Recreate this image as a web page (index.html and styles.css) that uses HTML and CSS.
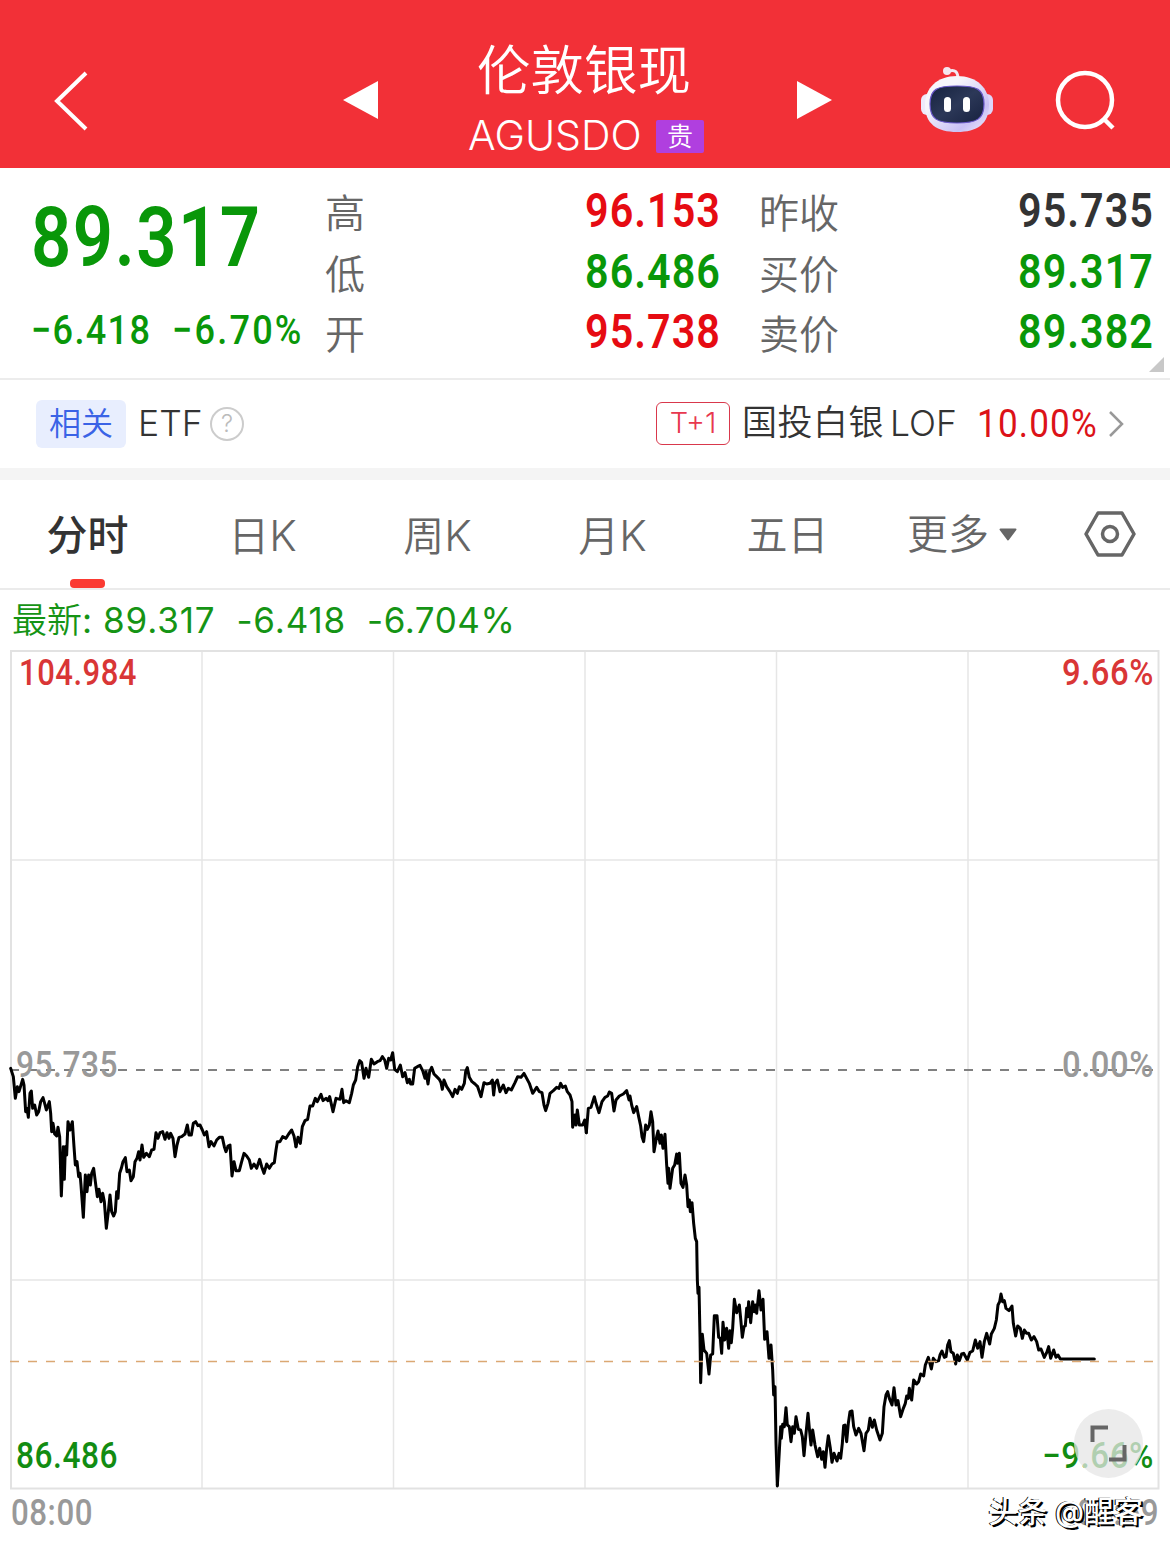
FILE: index.html
```html
<!DOCTYPE html>
<html lang="zh-CN">
<head>
    <meta charset="UTF-8">
    <meta name="viewport" content="width=device-width, initial-scale=1.0">
    <title>伦敦银现 AGUSDO</title>
    <link rel="stylesheet" href="styles.css">
</head>
<body>
    <header class="header">
        <svg class="back" width="36" height="62" viewBox="0 0 36 62"><path d="M33 3L4 31L33 59"/></svg>
        <svg class="prev" width="35" height="38" viewBox="0 0 35 38"><path d="M0 19L35 0V38Z"/></svg>
        <div class="title">
            <h1>伦敦银现</h1>
            <div class="code"><span>AGUSDO</span><i class="badge">贵</i></div>
        </div>
        <svg class="next" width="35" height="38" viewBox="0 0 35 38"><path d="M35 19L0 0V38Z"/></svg>
        <svg class="robot" width="74" height="68" viewBox="0 0 74 68">
            <defs>
                <linearGradient id="shell" x1="0" y1="0" x2="1" y2="1">
                    <stop offset="0.3" stop-color="#f7f6fb"/>
                    <stop offset="0.75" stop-color="#c9c0f5"/>
                    <stop offset="1" stop-color="#f1eefb"/>
                </linearGradient>
                <linearGradient id="face" x1="0" y1="0" x2="1" y2="1">
                    <stop offset="0" stop-color="#17233f"/>
                    <stop offset="0.5" stop-color="#2c3858"/>
                    <stop offset="1" stop-color="#17213f"/>
                </linearGradient>
            </defs>
            <path d="M29 5C35 3 38 6 38 13" fill="none" stroke="#f3e9f2" stroke-width="3"/>
            <circle cx="27" cy="5" r="4" fill="#f5e6ef"/>
            <rect x="1" y="28" width="12" height="21" rx="6" fill="#eeeafb"/>
            <rect x="61" y="28" width="12" height="21" rx="6" fill="#ddd5fa"/>
            <path d="M37 10C57 10 69 22 69 39C69 58 57 66 37 66C17 66 5 58 5 39C5 22 17 10 37 10Z" fill="url(#shell)"/>
            <path d="M37 20C57 20 64 23 64 38C64 53 57 57 37 57C17 57 10 53 10 38C10 23 17 20 37 20Z" fill="url(#face)" stroke="#6958c9" stroke-width="1.2"/>
            <rect x="24" y="31" width="7" height="15" rx="3.5" fill="#fff"/>
            <rect x="43" y="31" width="7" height="15" rx="3.5" fill="#fff"/>
        </svg>
        <svg class="search" width="62" height="62" viewBox="0 0 62 62"><circle cx="30" cy="30" r="27"/><path d="M48 48L58 58"/></svg>
    </header>

    <section class="quote">
        <div class="last">
            <div class="price num"><b>89.317</b></div>
            <div class="change num"><b>−6.418</b><b class="pct">−6.70%</b></div>
        </div>
        <div class="col col-a">
            <div class="row"><span>高</span><b class="num red">96.153</b></div>
            <div class="row"><span>低</span><b class="num green">86.486</b></div>
            <div class="row"><span>开</span><b class="num red">95.738</b></div>
        </div>
        <div class="col col-b">
            <div class="row"><span>昨收</span><b class="num dark">95.735</b></div>
            <div class="row"><span>买价</span><b class="num green">89.317</b></div>
            <div class="row"><span>卖价</span><b class="num green">89.382</b></div>
        </div>
        <i class="corner"></i>
    </section>

    <section class="related">
        <span class="tag">相关</span>
        <span class="etf">ETF</span>
        <span class="help">?</span>
        <span class="t1">T+1</span>
        <span class="fund">国投白银</span><span class="lof">LOF</span>
        <span class="rise num">10.00%</span>
        <svg class="more" width="16" height="28" viewBox="0 0 16 28"><path d="M2 2L14 14L2 26"/></svg>
    </section>

    <nav class="tabs">
        <a class="tab active">分时</a>
        <a class="tab">日<em>K</em></a>
        <a class="tab">周<em>K</em></a>
        <a class="tab">月<em>K</em></a>
        <a class="tab">五日</a>
        <a class="tab tab-more">更多<svg width="18" height="13" viewBox="0 0 18 13"><path d="M1.500 1.500H16.500L9 11.500Z"/></svg></a>
        <svg class="setting" width="52" height="46" viewBox="0 0 52 46"><path d="M14 2H38L50 23L38 44H14L2 23Z"/><circle cx="26" cy="23" r="7.500"/></svg>
    </nav>

    <div class="latest"><span class="cn">最新</span><span class="colon">:</span><span>89.317</span><span>-6.418</span><span>-6.704%</span></div>

    <div class="chart">
        <svg width="1170" height="903" viewBox="0 650 1170 903">
            <g class="grid">
                <path d="M202 651V1488M393.500 651V1488M585 651V1488M776.500 651V1488M968 651V1488M11 860H1158M11 1280H1158"/>
                <rect x="11" y="651" width="1147.500" height="837.500"/>
            </g>
            <path class="base" d="M10 1070H1158"/>

            <!-- price line, each piece is drawn at 3x in its own window -->
            <g class="line">
                <polyline transform="translate(0 1030) scale(.33333)" points="32,115 40,140 46,205 52,170 57,185 68,148 72,165 77,245 81,235 85,262 90,190 94,183 98,235 104,225 110,255 116,245 122,215 129,203 134,220 139,240 148,215 152,250 155,305 159,280 164,312 170,318 174,292 179,320 184,498 190,350 193,448 196,350 200,375 204,275 210,300 217,275 222,350 226,405 231,395 236,440 240,430 243,465 250,562 256,435 261,485 266,435 271,465 275,430 281,415 286,455 292,500 297,478 303,515 308,490 313,515 319,595 325,545 330,495 335,545 341,558 346,545 350,485 354,505 359,430 364,415 369,395 376,383 381,425 388,420 393,452 400,440 405,395 411,385 416,365 420,390 426,345 431,382 439,370 448,380 455,360 462,358 468,308 474,325 480,308 488,305 495,328 501,308 507,325 512,310 519,325 525,380 531,345 537,322 545,320 555,312 562,285 567,315 574,315 580,280 587,275 594,287 600,285 607,300 613,315 620,305 627,350 633,335 642,348 650,330 658,322 667,322 673,350 678,365 684,348 690,345 696,438 702,395 708,422 718,422 725,395 732,370 740,378 748,390 754,415 762,402 770,415 779,388 785,410 792,430 800,402 808,415 816,402 823,398 828,360 832,335 840,335 848,320 858,325 866,312 875,300 882,318 888,350"/>
                <polyline transform="translate(290 1030) scale(.33333)" points="18,350 24,322 31,340 37,290 45,272 53,268 60,228 68,228 76,205 82,215 93,193 99,212 108,205 114,212 119,200 129,245 138,205 150,208 156,178 161,218 168,212 178,218 185,190 190,165 197,150 203,110 209,92 215,98 222,145 228,115 236,142 244,88 252,102 262,95 270,92 277,80 284,90 290,115 296,85 302,90 308,68 314,118 322,125 331,105 338,140 345,128 352,158 358,148 362,162 368,162 374,115 382,110 390,106 398,122 405,145 408,125 414,162 419,125 425,112 432,132 440,140 448,148 453,158 457,178 462,150 470,170 480,185 488,200 495,178 502,190 508,170 515,178 523,160 527,125 532,113 538,142 546,155 555,162 563,170 573,200 582,158 590,162 600,160 607,150 611,195 615,160 622,150 630,185 640,165 648,188 655,175 664,180 675,158 683,140 693,142 702,130 710,145 718,160 728,190 740,172 748,185 756,188 762,225 767,242 774,220 780,190 790,182 800,172 807,175 812,160 818,172 826,168 832,185 840,195 846,215 848,292 855,255 858,285 862,240 868,285 878,285 884,270 889,308"/>
                <polyline transform="translate(540 1050) scale(.33333)" points="139,248 145,175 153,172 163,140 168,160 177,188 186,155 195,142 203,138 208,126 215,130 222,183 228,150 238,138 250,132 260,122 267,150 270,138 275,165 281,188 290,170 296,200 302,228 306,260 311,275 317,225 322,238 328,225 333,185 338,215 342,305 350,260 354,243 360,280 364,255 369,295 375,253 380,345 384,400 386,355 390,415 398,355 404,345 410,312 413,340 418,310 423,400 429,412 435,375 440,405 444,470 448,450 451,485 456,458 461,520 466,565 470,575 472,690 474,730 477,712 480,860 482,998 487,853 492,900 500,910 507,972 512,915 518,912 523,797 531,797 536,862 541,865 545,910 549,817 554,870 560,835 566,895 570,842 574,878 578,835 583,748 590,788 598,765 602,805 607,862 612,830 616,828 620,775 623,800 626,755 632,818 638,755 643,785 647,765 650,790 657,722 663,780 669,748 674,868 681,845 687,925 693,885 698,960 701,1035 705,1010 708,1180 712,1305"/>
                <polyline transform="translate(750 1270) scale(.33333)" points="82,648 86,580 92,470 94,505 98,463 103,470 108,413 112,465 118,470 123,515 128,470 133,490 138,440 145,478 152,480 157,500 162,557 168,490 174,430 178,475 183,525 188,480 195,525 203,560 209,535 215,568 220,545 225,592 230,535 235,497 241,535 246,577 252,550 261,573 267,550 272,565 277,520 281,467 285,465 290,515 295,460 300,425 306,423 311,470 318,495 326,475 333,490 342,542 348,490 355,480 360,445 367,472 373,450 380,480 390,510 397,490 402,410 408,375 413,365 418,385 426,405 432,353 438,405 444,392 452,440 460,415 466,400 470,378 475,385 478,355 485,390 491,330 500,342 506,335 512,312 521,318 526,285 535,262 544,297 550,265 558,275 566,272 570,255 576,243 583,262 588,260 593,225 598,212 603,245 610,250 617,282 622,255 628,272 635,252 641,250 652,270 660,247 668,243 676,210 683,235 690,215 696,262 703,215 710,190 719,222 724,192 733,175 739,150 744,105 749,95 753,72 758,95 763,92 768,115 777,122 786,108 790,160 797,198 803,168 811,175 817,205 823,180 830,190 836,190 844,210 852,200 860,215 866,240 873,237 883,262 890,248 896,230 902,265 911,240 918,262 924,255 931,267 1033,267"/>
            </g>
            <path class="now" d="M10 1361.500H1158"/>

            <g class="label">
                <text class="up" x="19" y="685" textLength="118" lengthAdjust="spacingAndGlyphs">104.984</text>
                <text class="up" x="1062" y="685" textLength="92" lengthAdjust="spacingAndGlyphs">9.66%</text>
                <text class="mid" x="16" y="1077" textLength="102" lengthAdjust="spacingAndGlyphs">95.735</text>
                <text class="mid" x="1062" y="1077" textLength="92" lengthAdjust="spacingAndGlyphs">0.00%</text>
                <text class="down" x="16" y="1468" textLength="102" lengthAdjust="spacingAndGlyphs">86.486</text>
                <text class="down" x="1042" y="1468" textLength="112" lengthAdjust="spacingAndGlyphs">−9.66%</text>
                <text class="time" x="11" y="1525" textLength="82" lengthAdjust="spacingAndGlyphs">08:00</text>
                <text class="time" x="1077" y="1525" textLength="82" lengthAdjust="spacingAndGlyphs">05:59</text>
            </g>

            <g class="expand">
                <circle cx="1108.500" cy="1443.500" r="34.500"/>
                <path d="M1092.500 1442V1427.500H1108M1124.500 1445V1459.500H1109"/>
            </g>
        </svg>
        <div class="watermark">头条 @醒客</div>
    </div>
</body>
</html>
```
FILE: styles.css
```css
* {
    box-sizing: border-box;
}
body {
    margin: 0;
    width: 1170px;
    height: 1553px;
    overflow: hidden;
    background: #fff;
    color: #333;
    font-family: Inter, "Noto Sans CJK SC", sans-serif;
}
svg {
    display: block;
    flex: none;
}
i, em {
    font-style: normal;
}
.num {
    font-family: Roboto, sans-serif;
    white-space: nowrap;
}
.red {
    color: #e60b12;
}
.green {
    color: #099709;
}
.dark {
    color: #333;
}

/* header */
.header {
    display: flex;
    height: 168px;
    background: #f23037;
    color: #fff;
}
.back {
    margin: 70px 0 0 53px;
    fill: none;
    stroke: #fff;
    stroke-width: 4;
}
.prev {
    margin: 81px 0 0 254px;
    fill: #fff;
}
.title {
    width: 240px;
    margin-left: 86px;
    padding-top: 31px;
}
.title h1 {
    margin: 0;
    padding-left: 13px;
    font-family: "Noto Sans CJK SC", sans-serif;
    font-size: 53.500px;
    font-weight: 350;
    line-height: 72px;
    white-space: nowrap;
}
.code {
    display: flex;
    align-items: center;
    height: 58px;
    margin-top: 3px;
    padding-left: 4px;
    font-size: 41px;
}
.code span {
    width: 189px;
    font-weight: 350;
}
.badge {
    width: 48px;
    height: 33px;
    margin-top: 2px;
    border-radius: 2px;
    background: #b03fdf;
    font-size: 26px;
    font-weight: 350;
    line-height: 33px;
    text-align: center;
}
.next {
    margin: 81px 0 0 93px;
    fill: #fff;
}
.robot {
    margin: 66px 0 0 88px;
}
.search {
    margin: 70px 0 0 61px;
    fill: none;
    stroke: #fff;
    stroke-width: 4.500;
}

/* quote */
.quote {
    display: flex;
    position: relative;
    height: 212px;
    border-bottom: 2px solid #ececec;
}
.last {
    width: 325px;
    padding: 19px 0 0 31px;
    color: #099709;
}
.price {
    height: 100px;
    font-size: 84px;
    line-height: 101px;
}
.price b {
    display: inline-block;
    font-weight: 600;
    letter-spacing: 1.800px;
    transform: scaleX(.84);
    transform-origin: left;
}
.change {
    display: flex;
    height: 50px;
    margin-top: 18px;
    font-size: 41px;
    line-height: 50px;
}
.change b {
    width: 141px;
    font-weight: 500;
    letter-spacing: 1.500px;
    transform: scaleX(.88);
    transform-origin: left;
}
.change .pct {
    letter-spacing: 2.500px;
}
.col {
    padding-top: 13px;
}
.col-a {
    width: 395px;
}
.col-b {
    width: 394px;
    margin-left: 39px;
}
.row {
    display: flex;
    justify-content: space-between;
    height: 60.500px;
    line-height: 60px;
}
.row span {
    color: #666;
    font-family: "Noto Sans CJK SC", sans-serif;
    font-size: 40px;
    font-weight: 350;
}
.row b {
    margin-right: -1px;
    font-size: 48px;
    font-weight: 600;
    letter-spacing: 1.200px;
    transform: scaleX(.86);
    transform-origin: right;
}
.corner {
    position: absolute;
    right: 6px;
    bottom: 6px;
    border: solid transparent;
    border-width: 15px 0 0 15px;
    border-bottom: 0;
    border-right: 15px solid #c8c8c8;
    border-left: 0;
}

/* related fund */
.related {
    display: flex;
    align-items: center;
    height: 100px;
    padding: 0 46px 1px 36px;
    border-bottom: 12px solid #f4f4f4;
    font-size: 34px;
    font-weight: 350;
    white-space: nowrap;
}
.tag {
    width: 90px;
    height: 48px;
    border-radius: 6px;
    background: #e8eefe;
    color: #3a63e6;
    font-size: 32px;
    line-height: 47px;
    text-align: center;
}
.etf {
    width: 72px;
    margin-left: 12px;
    font-size: 35.500px;
}
.help {
    width: 34px;
    height: 34px;
    border: 2.500px solid #ccc;
    border-radius: 50%;
    color: #bbb;
    font-size: 24px;
    line-height: 29px;
    text-align: center;
}
.t1 {
    width: 74px;
    height: 43px;
    margin-left: auto;
    border: 1.500px solid #d9384c;
    border-radius: 6px;
    color: #e8384f;
    font-size: 29px;
    line-height: 40px;
    text-align: center;
}
.fund {
    width: 148px;
    margin-left: 12px;
    font-size: 35px;
    line-height: 48px;
    padding-bottom: 3px;
    letter-spacing: 0.500px;
}
.lof {
    width: 87px;
    font-size: 35.500px;
}
.rise {
    width: 119px;
    color: #dc1218;
    font-size: 39px;
    font-weight: 400;
    letter-spacing: 1.300px;
    transform: scaleX(.9);
    transform-origin: left;
}
.more {
    margin-left: 12px;
    fill: none;
    stroke: #999;
    stroke-width: 2.500;
}

/* tabs */
.tabs {
    display: flex;
    align-items: center;
    height: 110px;
    border-bottom: 2px solid #ebebeb;
    color: #666;
}
.tab {
    position: relative;
    width: 175px;
    height: 108px;
    font-size: 41px;
    font-weight: 350;
    line-height: 111px;
    text-align: center;
}
.tab em {
    font-size: 42.500px;
}
.active {
    color: #333;
    font-weight: 500;
}
.active::after {
    content: "";
    position: absolute;
    left: 70px;
    bottom: 0;
    width: 35px;
    height: 9px;
    border-radius: 4px;
    background: #fb3a32;
}
.tab-more {
    display: flex;
    align-items: center;
    padding-left: 32px;
}
.tab-more svg {
    margin-left: 10px;
    fill: #666;
    stroke: #666;
    stroke-width: 2;
    stroke-linejoin: round;
}
.setting {
    margin-left: 34px;
    fill: none;
    stroke: #666;
    stroke-width: 3.500;
    stroke-linejoin: round;
}

/* chart */
.latest {
    display: flex;
    height: 60px;
    padding-left: 12px;
    color: #159415;
    font-size: 35px;
    line-height: 61px;
}
.latest span {
    margin-right: 21px;
    letter-spacing: 0.850px;
}
.latest span:last-child {
    letter-spacing: 0.550px;
}
.latest .cn {
    width: 70px;
    margin-right: 0;
    font-weight: 350;
    letter-spacing: 0;
}
.latest .colon {
    width: 21px;
    margin-right: 0;
}
.chart {
    position: relative;
}
.grid {
    fill: none;
    stroke: #e6e6e6;
    stroke-width: 1.500;
}
.grid rect {
    stroke: #e2e2e2;
    stroke-width: 2;
}
.base {
    stroke: #808080;
    stroke-width: 2;
    stroke-dasharray: 9 9;
}
.now {
    stroke: #dba873;
    stroke-width: 1.500;
    stroke-dasharray: 9 9;
}
.line {
    fill: none;
    stroke: #000;
    stroke-width: 9;
    stroke-linejoin: round;
    stroke-linecap: round;
}
.label {
    font-family: Roboto, sans-serif;
    font-size: 36px;
    font-weight: 500;
    letter-spacing: 0.600px;
}
.up {
    fill: #d93636;
}
.mid {
    fill: #999;
}
.down {
    fill: #128c12;
}
.time {
    fill: #999;
}
.expand circle {
    fill: #e6e6e6;
    opacity: 0.75;
}
.expand path {
    fill: none;
    stroke: #666;
    stroke-width: 4;
}
.watermark {
    position: absolute;
    right: 27px;
    top: 839px;
    color: #fff;
    font-size: 29.500px;
    line-height: 44px;
    font-weight: 500;
    text-shadow: -1px 0 0 #000, 2px 2px 0 #000;
    white-space: nowrap;
}
```
